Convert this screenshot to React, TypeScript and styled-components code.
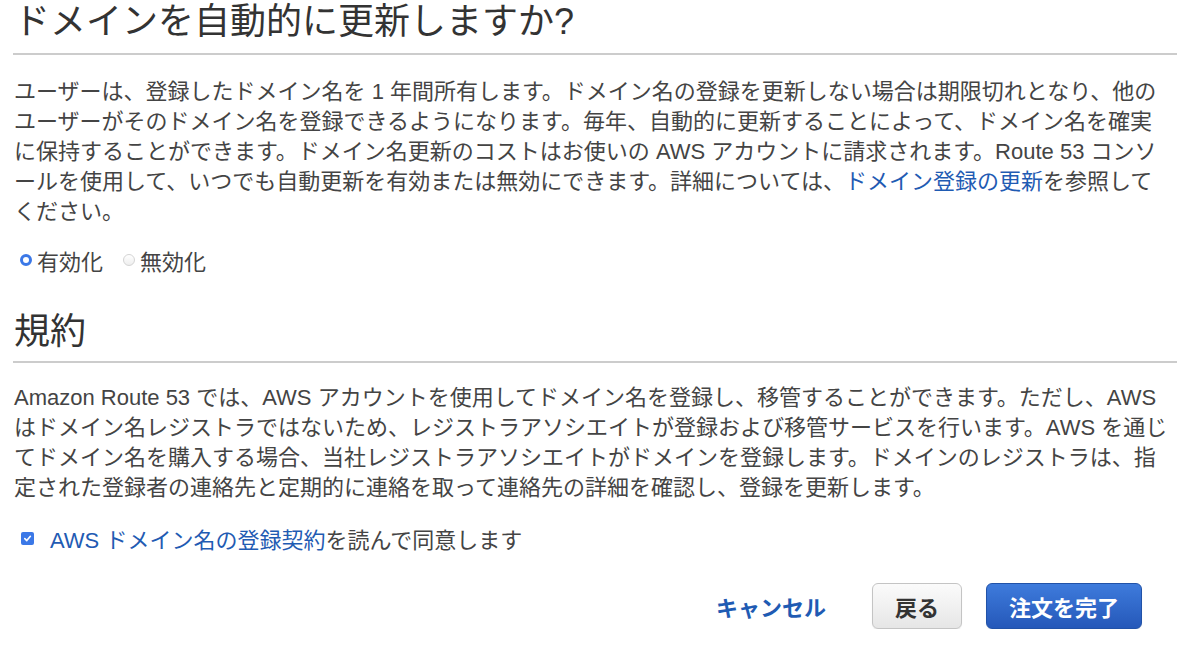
import React from "react";
import styled, { createGlobalStyle } from "styled-components";

const Global = createGlobalStyle`
  html, body { margin: 0; padding: 0; background: #fff; }
  body {
    font-family: "Liberation Sans", "Noto Sans CJK JP", sans-serif;
    color: #444;
  }
`;

const Page = styled.div`
  padding: 0 23px 0 13px;
`;

const Section = styled.section<{ $top?: number }>`
  margin-top: ${(p) => p.$top ?? 0}px;
`;

const Heading = styled.h2<{ $pad?: number }>`
  margin: 0;
  padding: 0 0 ${(p) => p.$pad ?? 9}px 1px;
  font-size: 36px;
  line-height: 44px;
  font-weight: 400;
  color: #333;
  border-bottom: 2px solid #cccccc;
`;

const Para = styled.p<{ $top?: number }>`
  margin: ${(p) => p.$top ?? 22}px 9px 0 1px;
  font-size: 22px;
  line-height: 30px;
`;

const Link = styled.a`
  color: #1f5bb3;
  text-decoration: none;
`;

const RadioRow = styled.div`
  display: flex;
  align-items: center;
  margin-top: 18px;
  height: 30px;
  padding-left: 7px;
  font-size: 22px;
  gap: 20px;
`;

const RadioLabel = styled.label`
  display: flex;
  align-items: center;
  gap: 5px;
  color: #444;
`;

const Radio = styled.input.attrs({ type: "radio" })`
  appearance: none;
  margin: 0;
  width: 12px;
  height: 12px;
  border-radius: 50%;
  box-sizing: border-box;
  border: 1px solid #d4d4d4;
  background: linear-gradient(#fff, #eee);
  &:checked {
    border: 3.5px solid #3b78e7;
    background: #fff;
  }
`;

const CheckRow = styled.label`
  display: flex;
  align-items: center;
  gap: 16px;
  margin-top: 20px;
  height: 30px;
  padding-left: 8px;
  font-size: 22px;
`;

const CheckBox = styled.span`
  display: inline-flex;
  align-items: center;
  justify-content: center;
  width: 13px;
  height: 13px;
  border-radius: 2px;
  background: #3b78e7;
`;

const Actions = styled.div`
  display: flex;
  justify-content: flex-end;
  align-items: center;
  gap: 24px;
  margin-top: 30px;
  padding-right: 35px;
`;

const CancelLink = styled.a`
  padding: 0 22px;
  font-size: 22px;
  font-weight: 700;
  color: #1f5bb3;
  text-decoration: none;
`;

const Button = styled.button<{ $primary?: boolean }>`
  height: 46px;
  padding: 0 22px;
  min-width: ${(p) => (p.$primary ? 156 : 89)}px;
  box-sizing: border-box;
  border-radius: 6px;
  font-family: inherit;
  font-size: 22px;
  font-weight: 700;
  cursor: pointer;
  color: ${(p) => (p.$primary ? "#fff" : "#333")};
  border: 1px solid ${(p) => (p.$primary ? "#2152a8" : "#c4c4c4")};
  background: ${(p) =>
    p.$primary
      ? "linear-gradient(#3e7bdc, #2558b9)"
      : "linear-gradient(#fbfbfb, #e6e6e6)"};
  box-shadow: 0 1px 1px rgba(0, 0, 0, 0.08);
`;

export default function App() {
  return (
    <>
      <Global />
      <Page>
        <Section>
          <Heading>ドメインを自動的に更新しますか?</Heading>
          <Para>
            ユーザーは、登録したドメイン名を 1 年間所有します。ドメイン名の登録を更新しない場合は期限切れとなり、他のユーザーがそのドメイン名を登録できるようになります。毎年、自動的に更新することによって、ドメイン名を確実に保持することができます。ドメイン名更新のコストはお使いの AWS アカウントに請求されます。Route 53 コンソールを使用して、いつでも自動更新を有効または無効にできます。詳細については、
            <Link href="#">ドメイン登録の更新</Link>を参照してください。
          </Para>
          <RadioRow>
            <RadioLabel>
              <Radio name="renew" defaultChecked />
              有効化
            </RadioLabel>
            <RadioLabel>
              <Radio name="renew" />
              無効化
            </RadioLabel>
          </RadioRow>
        </Section>
        <Section $top={35}>
          <Heading $pad={7}>規約</Heading>
          <Para $top={20}>
            Amazon Route 53 では、AWS アカウントを使用してドメイン名を登録し、移管することができます。ただし、AWS はドメイン名レジストラではないため、レジストラアソシエイトが登録および移管サービスを行います。AWS を通じてドメイン名を購入する場合、当社レジストラアソシエイトがドメインを登録します。ドメインのレジストラは、指定された登録者の連絡先と定期的に連絡を取って連絡先の詳細を確認し、登録を更新します。
          </Para>
          <CheckRow>
            <CheckBox>
              <svg width="9" height="9" viewBox="0 0 10 10">
                <path d="M2 5.2 L4.2 7.3 L8.2 2.6" fill="none" stroke="#fff" strokeWidth="1.8" strokeLinecap="round" strokeLinejoin="round" />
              </svg>
            </CheckBox>
            <span>
              <Link href="#">AWS ドメイン名の登録契約</Link>を読んで同意します
            </span>
          </CheckRow>
        </Section>
        <Actions>
          <CancelLink href="#">キャンセル</CancelLink>
          <Button>戻る</Button>
          <Button $primary>注文を完了</Button>
        </Actions>
      </Page>
    </>
  );
}
